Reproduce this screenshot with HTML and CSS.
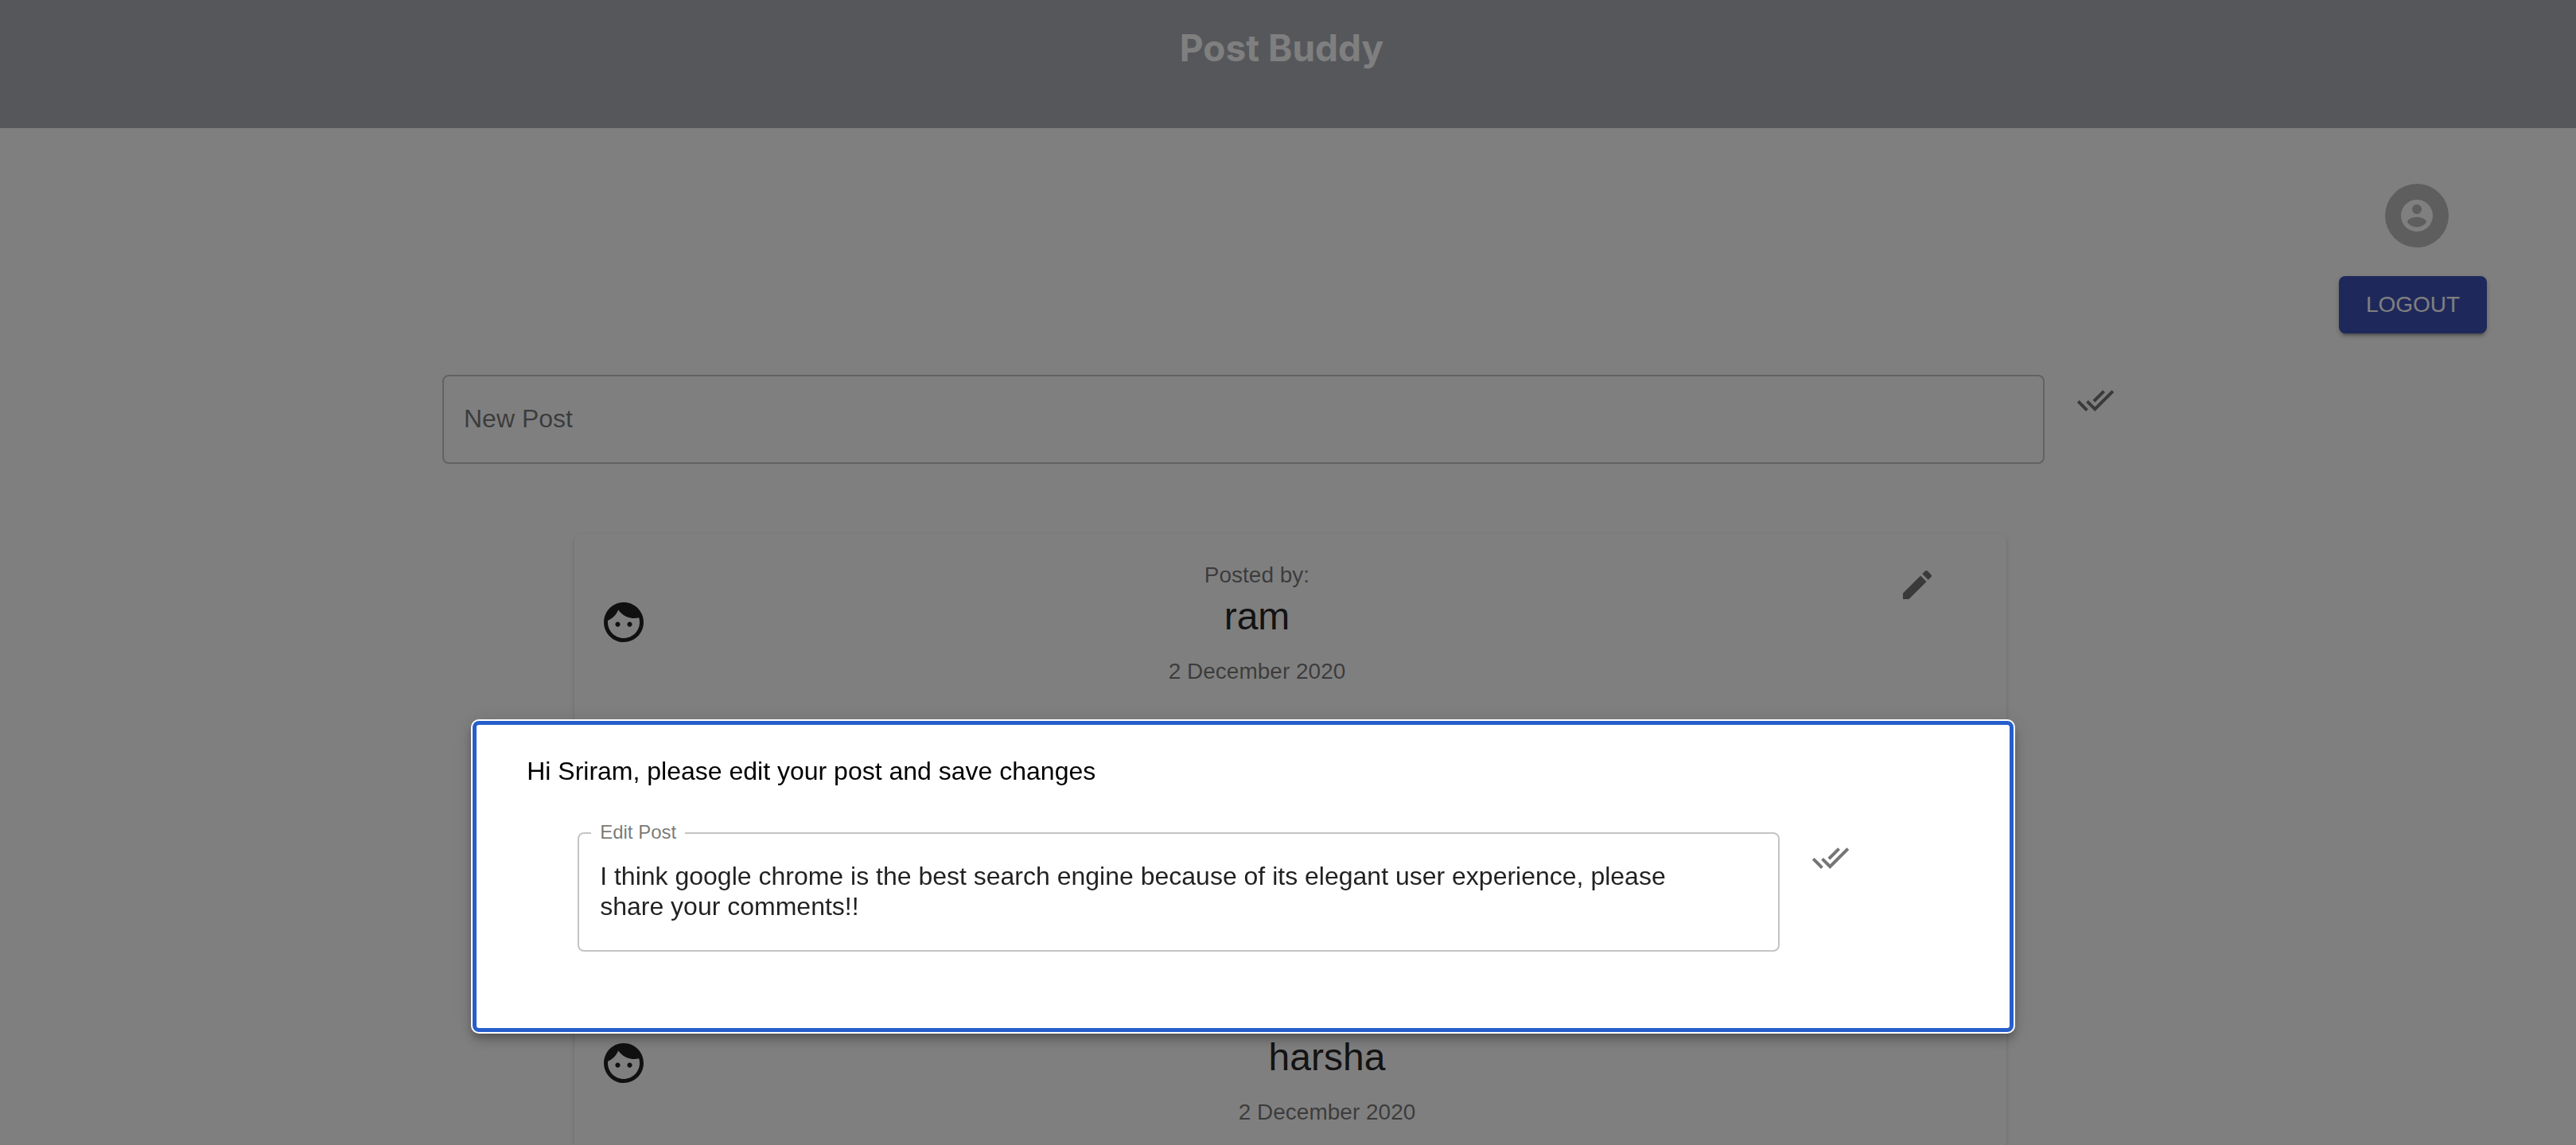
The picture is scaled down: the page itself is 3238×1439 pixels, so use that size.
FILE: index.html
```html
<!DOCTYPE html>
<html lang="en">
<head>
  <meta charset="utf-8">
  <title>Post Buddy</title>
  <link rel="stylesheet" href="styles.css">
</head>
<body>
  <header class="banner">
    <h1 class="banner-title">Post Buddy</h1>
  </header>

  <main class="page">
    <section class="account">
      <span class="avatar">
        <svg class="icon" viewBox="0 0 24 24" aria-hidden="true"><path d="M12 2C6.48 2 2 6.48 2 12s4.48 10 10 10 10-4.48 10-10S17.52 2 12 2zm0 3c1.66 0 3 1.34 3 3s-1.34 3-3 3-3-1.34-3-3 1.34-3 3-3zm0 14.2c-2.5 0-4.71-1.28-6-3.22.03-1.99 4-3.08 6-3.08 1.99 0 5.97 1.09 6 3.08-1.29 1.94-3.5 3.22-6 3.22z"/></svg>
      </span>
      <button class="logout" type="button">LOGOUT</button>
    </section>

    <form class="composer">
      <input class="new-post" type="text" placeholder="New Post" aria-label="New Post">
      <button class="icon-button" type="button" aria-label="Publish">
        <svg class="icon" viewBox="0 0 24 24" aria-hidden="true"><path d="M18 7l-1.41-1.41-6.34 6.34 1.41 1.41L18 7zm4.24-1.41L11.66 16.17 7.48 12l-1.41 1.41L11.66 19l12-12-1.42-1.41zM.41 13.41L6 19l1.41-1.41L1.83 12 .41 13.41z"/></svg>
      </button>
    </form>

    <section class="feed">
      <article class="card">
        <div class="card-header">
          <svg class="face" viewBox="0 0 24 24" aria-hidden="true"><path d="M9 11.75c-.69 0-1.25.56-1.25 1.25s.56 1.25 1.25 1.25 1.25-.56 1.25-1.25-.56-1.25-1.25-1.25zm6 0c-.69 0-1.25.56-1.25 1.25s.56 1.25 1.25 1.25 1.25-.56 1.25-1.25-.56-1.25-1.25-1.25zM12 2C6.48 2 2 6.48 2 12s4.48 10 10 10 10-4.48 10-10S17.52 2 12 2zm0 18c-4.41 0-8-3.59-8-8 0-.29.02-.58.05-.86 2.36-1.05 4.23-2.98 5.21-5.37C11.07 8.33 14.05 10 17.42 10c.78 0 1.53-.09 2.25-.26.21.71.33 1.47.33 2.26 0 4.41-3.59 8-8 8z"/></svg>
          <div class="byline">
            <p class="meta">Posted by:</p>
            <h2 class="author">ram</h2>
            <p class="meta">2 December 2020</p>
          </div>
          <div class="card-action">
            <button class="icon-button" type="button" aria-label="Edit">
              <svg class="icon" viewBox="0 0 24 24" aria-hidden="true"><path d="M3 17.25V21h3.75L17.81 9.94l-3.75-3.75L3 17.25zM20.71 7.04c.39-.39.39-1.02 0-1.41l-2.34-2.34c-.39-.39-1.02-.39-1.41 0l-1.83 1.83 3.75 3.75 1.83-1.83z"/></svg>
            </button>
          </div>
        </div>
      </article>

      <article class="card">
        <div class="card-header">
          <svg class="face" viewBox="0 0 24 24" aria-hidden="true"><path d="M9 11.75c-.69 0-1.25.56-1.25 1.25s.56 1.25 1.25 1.25 1.25-.56 1.25-1.25-.56-1.25-1.25-1.25zm6 0c-.69 0-1.25.56-1.25 1.25s.56 1.25 1.25 1.25 1.25-.56 1.25-1.25-.56-1.25-1.25-1.25zM12 2C6.48 2 2 6.48 2 12s4.48 10 10 10 10-4.48 10-10S17.52 2 12 2zm0 18c-4.41 0-8-3.59-8-8 0-.29.02-.58.05-.86 2.36-1.05 4.23-2.98 5.21-5.37C11.07 8.33 14.05 10 17.42 10c.78 0 1.53-.09 2.25-.26.21.71.33 1.47.33 2.26 0 4.41-3.59 8-8 8z"/></svg>
          <div class="byline">
            <p class="meta">Posted by:</p>
            <h2 class="author">harsha</h2>
            <p class="meta">2 December 2020</p>
          </div>
        </div>
      </article>
    </section>
  </main>

  <div class="backdrop">
    <div class="modal" role="dialog" aria-modal="true" aria-labelledby="modal-title">
      <p class="modal-title" id="modal-title">Hi Sriram, please edit your post and save changes</p>
      <form class="editor">
        <div class="edit-field">
          <label class="edit-label" for="edit-post">Edit Post</label>
          <textarea class="edit-text" id="edit-post" rows="2">I think google chrome is the best search engine because of its elegant user experience, please
share your comments!!</textarea>
        </div>
        <button class="icon-button" type="button" aria-label="Save changes">
          <svg class="icon" viewBox="0 0 24 24" aria-hidden="true"><path d="M18 7l-1.41-1.41-6.34 6.34 1.41 1.41L18 7zm4.24-1.41L11.66 16.17 7.48 12l-1.41 1.41L11.66 19l12-12-1.42-1.41zM.41 13.41L6 19l1.41-1.41L1.83 12 .41 13.41z"/></svg>
        </button>
      </form>
    </div>
  </div>
</body>
</html>
```
FILE: styles.css
```css
* {
  box-sizing: border-box;
}

body {
  margin: 0;
  height: 100vh;
  overflow: hidden;
  background: #fff;
  color: rgba(0, 0, 0, 0.87);
  font-family: "Liberation Sans", Helvetica, Arial, sans-serif;
  font-size: 32px;
  line-height: 38px;
}

button,
input,
textarea {
  font: inherit;
  color: inherit;
}

h1,
h2,
p {
  margin: 0;
  font-weight: 400;
}

.icon {
  display: block;
  width: 48px;
  height: 48px;
  fill: currentColor;
}

.icon-button {
  flex: none;
  padding: 24px;
  border: 0;
  border-radius: 50%;
  background: none;
  color: rgba(0, 0, 0, 0.54);
}

/* Banner */
.banner {
  padding: 32px 16px 73px 0;
  background: #acaeb6;
  text-align: center;
}

.banner-title {
  color: #fff;
  font-family: Inter, sans-serif;
  font-size: 46px;
  font-weight: 700;
  line-height: 56px;
}

/* Account */
.page {
  padding-top: 70px;
}

.account {
  display: flex;
  flex-direction: column;
  align-items: flex-end;
  gap: 36px;
  padding-right: 112px;
}

.avatar {
  display: flex;
  align-items: center;
  justify-content: center;
  width: 80px;
  height: 80px;
  margin-right: 48px;
  border-radius: 50%;
  background: #bdbdbd;
  color: #fff;
}

.logout {
  min-width: 186px;
  padding: 12px 30px;
  border: 0;
  border-radius: 8px;
  background: #3f51b5;
  color: #fff;
  font-size: 28px;
  line-height: 48px;
  box-shadow: 0 6px 2px -4px rgba(0, 0, 0, 0.2), 0 4px 4px 0 rgba(0, 0, 0, 0.14), 0 2px 10px 0 rgba(0, 0, 0, 0.12);
}

/* Composer */
.composer {
  display: flex;
  align-items: flex-start;
  justify-content: center;
  gap: 16px;
  margin-top: 36px;
}

.new-post {
  width: 62.2%;
  height: 112px;
  margin-top: 16px;
  padding: 0 25px 2px;
  border: 2px solid rgba(0, 0, 0, 0.23);
  border-radius: 8px;
  background: none;
}

.new-post::placeholder {
  color: rgba(0, 0, 0, 0.54);
  opacity: 1;
}

/* Feed */
.feed {
  display: grid;
  grid-template-columns: minmax(0, 1800px);
  justify-content: center;
  gap: 40px;
  margin-top: 88px;
  padding-left: 6px;
}

.card {
  min-height: 514px;
  border-radius: 8px;
  background: #fff;
  box-shadow: 0 4px 2px -2px rgba(0, 0, 0, 0.2), 0 2px 2px 0 rgba(0, 0, 0, 0.14), 0 2px 6px 0 rgba(0, 0, 0, 0.12);
}

.card-header {
  display: flex;
  align-items: center;
  gap: 32px;
  padding: 32px;
}

.face {
  flex: none;
  width: 60px;
  height: 60px;
  margin-bottom: 4px;
}

.face path {
  fill: rgba(0, 0, 0, 0.87);
}

.byline {
  flex: 1;
  text-align: center;
}

.meta {
  color: rgba(0, 0, 0, 0.54);
  font-size: 28px;
  line-height: 40px;
}

.author {
  margin-bottom: 17px;
  font-size: 48px;
  line-height: 64px;
}

.card-action {
  align-self: flex-start;
  margin: -16px -16px 0 -32px;
  padding: 0 48px;
}

/* Modal */
.backdrop {
  position: fixed;
  inset: 0;
  background: rgba(0, 0, 0, 0.5);
}

.modal {
  position: absolute;
  top: 906px;
  left: 18.35%;
  right: 21.83%;
  padding: 39px 63px 96px;
  border: 5px solid #265fcb;
  border-radius: 8px;
  background: #fff;
  box-shadow: 0 0 0 2px #fff, 0 6px 10px 0 rgba(0, 0, 0, 0.2), 0 10px 16px 2px rgba(0, 0, 0, 0.14), 0 2px 28px 2px rgba(0, 0, 0, 0.12);
}

.modal-title {
  color: #000;
}

.editor {
  display: flex;
  align-items: flex-start;
  gap: 16px;
  margin-top: 42px;
  padding-left: 64px;
}

.edit-field {
  position: relative;
  width: 87%;
  margin-top: 16px;
}

.edit-label {
  position: absolute;
  top: -14px;
  left: 17px;
  padding: 0 11px;
  background: #fff;
  color: rgba(0, 0, 0, 0.54);
  font-size: 24px;
  line-height: 28px;
}

.edit-text {
  display: block;
  width: 100%;
  height: 150px;
  padding: 34px 26px;
  border: 2px solid rgba(0, 0, 0, 0.23);
  border-radius: 8px;
  background: none;
  line-height: 38px;
  resize: none;
  overflow: hidden;
}
```
